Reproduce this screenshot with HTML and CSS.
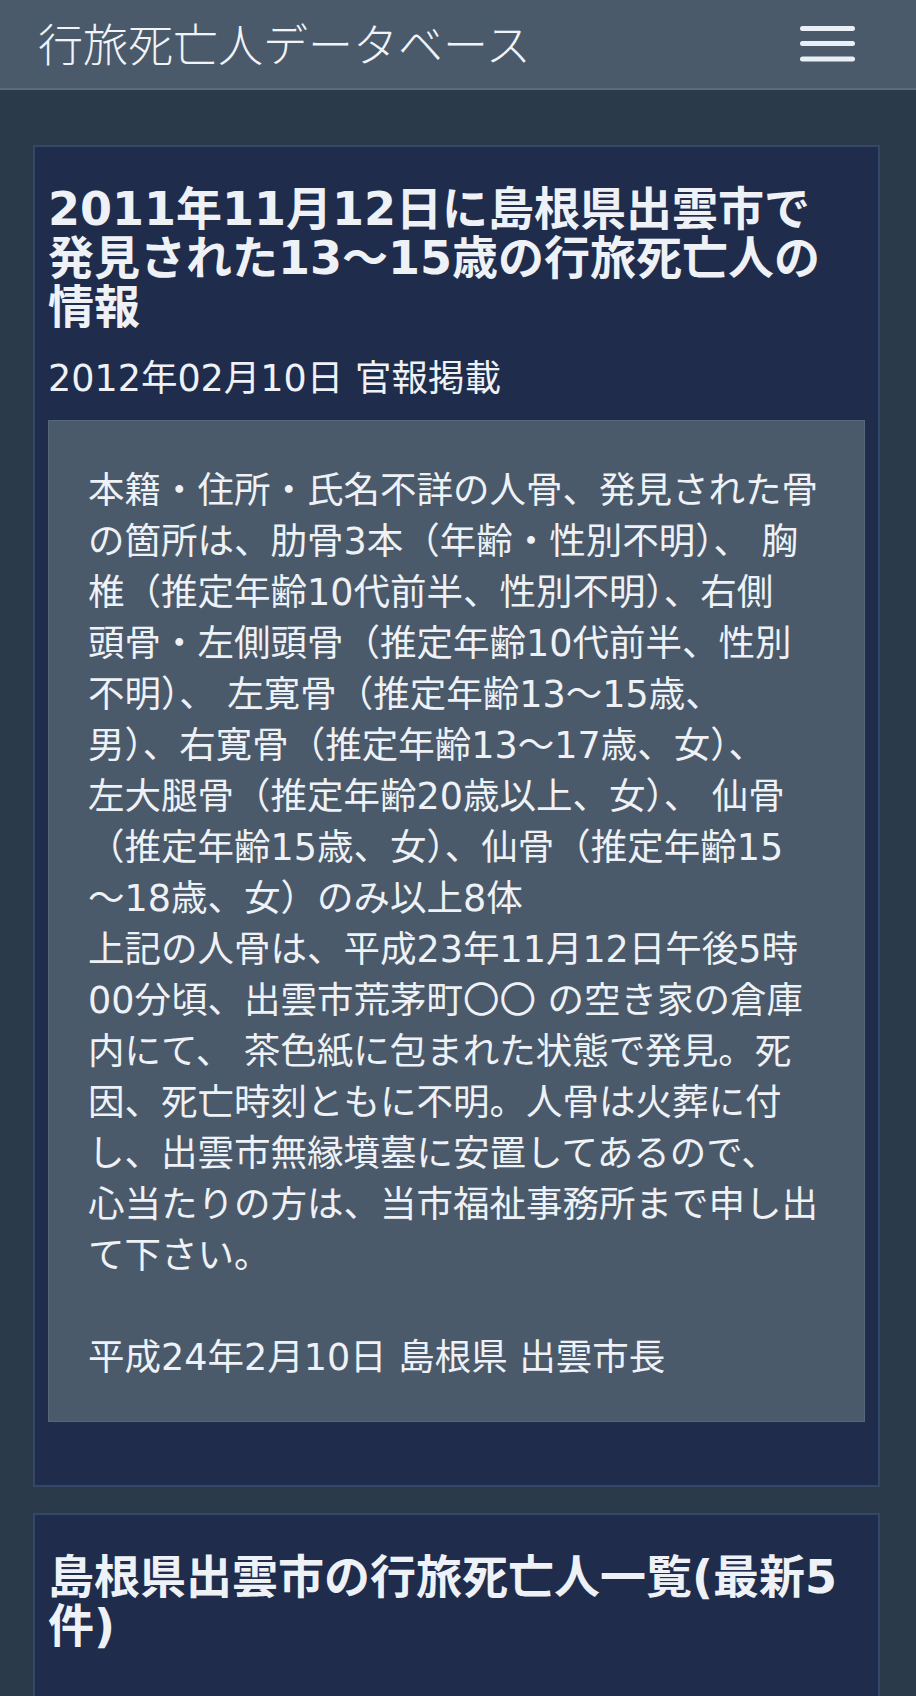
FILE: index.html
```html
<!DOCTYPE html>
<html lang="ja">
<head>
<meta charset="utf-8">
<title>行旅死亡人データベース</title>
<link rel="stylesheet" href="styles.css">
</head>
<body>
<header class="navbar">
  <span class="brand">行旅死亡人データベース</span>
  <button class="menu-toggle" aria-label="メニュー">
    <svg width="55" height="36" viewBox="0 0 55 36" aria-hidden="true">
      <rect x="0" y="0" width="55" height="5" rx="2.5" fill="#e9eff7"/>
      <rect x="0" y="15" width="55" height="5" rx="2.5" fill="#e9eff7"/>
      <rect x="0" y="30.5" width="55" height="5" rx="2.5" fill="#e9eff7"/>
    </svg>
  </button>
</header>
<main class="container">
  <section class="card">
    <h2 class="card-title">2011年11月12日に島根県出雲市で<br>発見された13〜15歳の行旅死亡人の<br>情報</h2>
    <p class="card-date">2012年02月10日 官報掲載</p>
    <div class="notice">
      <p>本籍・住所・氏名不詳の人骨、発見された骨<br>の箇所は、肋骨3本（年齢・性別不明）、 胸<br>椎（推定年齢10代前半、性別不明）、右側<br>頭骨・左側頭骨（推定年齢10代前半、性別<br>不明）、 左寛骨（推定年齢13〜15歳、<br>男）、右寛骨（推定年齢13〜17歳、女）、<br>左大腿骨（推定年齢20歳以上、女）、 仙骨<br>（推定年齢15歳、女）、仙骨（推定年齢15<br>〜18歳、女）のみ以上8体<br>上記の人骨は、平成23年11月12日午後5時<br>00分頃、出雲市荒茅町〇〇 の空き家の倉庫<br>内にて、 茶色紙に包まれた状態で発見。死<br>因、死亡時刻ともに不明。人骨は火葬に付<br>し、出雲市無縁墳墓に安置してあるので、<br>心当たりの方は、当市福祉事務所まで申し出<br>て下さい。<br><br>平成24年2月10日 島根県 出雲市長</p>
    </div>
  </section>
  <section class="card card-list">
    <h2 class="card-title">島根県出雲市の行旅死亡人一覧(最新5<br>件)</h2>
  </section>
</main>
</body>
</html>
```
FILE: styles.css
```css
html, body {
  margin: 0;
  padding: 0;
}
body {
  background: #2b3a4a;
  color: #eef1f5;
  font-family: "DejaVu Sans", "Noto Sans CJK JP", sans-serif;
}
.navbar {
  height: 88px;
  border-bottom: 2px solid #5a6b7c;
  background: #4a5a6b;
  display: flex;
  align-items: center;
  justify-content: space-between;
  padding: 0 61px 0 38px;
}
.brand {
  font-family: "Noto Sans CJK JP", sans-serif;
  font-size: 45px;
  font-weight: 300;
  line-height: 45px;
  color: #f0f3f7;
  padding-bottom: 4px;
}
.menu-toggle {
  background: none;
  border: 0;
  padding: 0;
  margin: 0;
  width: 55px;
  height: 36px;
  display: flex;
}
.container {
  padding: 55px 36px 0 33px;
}
.card {
  background: #1f2c4b;
  border: 2px solid #33476a;
  padding: 38px 13px 63px;
  margin-bottom: 26px;
}
.card-list {
  padding-bottom: 220px;
}
.card-title {
  margin: 0;
  font-size: 46px;
  line-height: 49px;
  font-weight: 700;
  white-space: nowrap;
}
.card-date {
  margin: 21px 0 16px;
  font-size: 36.5px;
  line-height: 51px;
}
.notice {
  background: #4a5a6b;
  border: 1px solid #56677a;
  padding: 44px 39px 38px;
}
.notice p {
  margin: 0;
  font-size: 36.5px;
  line-height: 51px;
  white-space: nowrap;
}
```
